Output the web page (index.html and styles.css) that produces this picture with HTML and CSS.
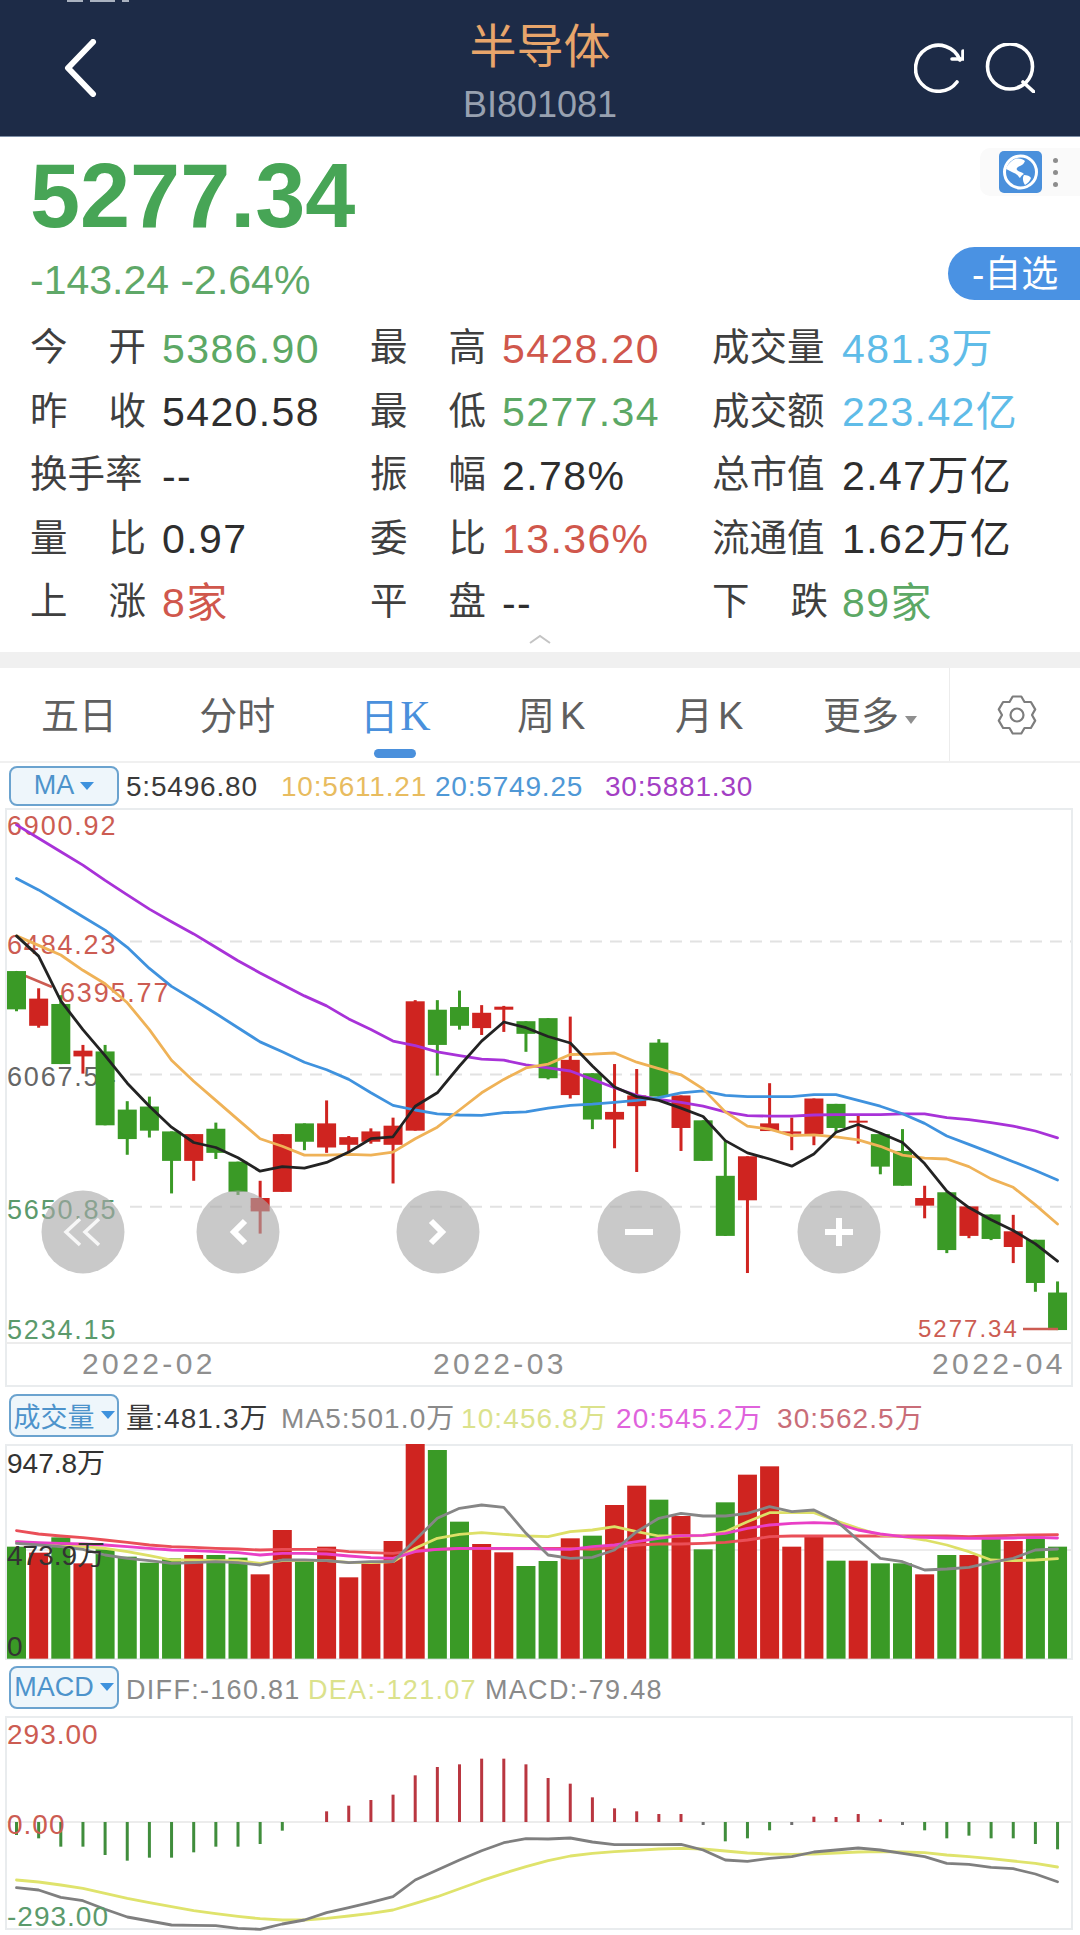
FILE: index.html
```html
<!DOCTYPE html>
<html lang="zh">
<head>
<meta charset="utf-8">
<title>半导体 BI801081</title>
<link rel="stylesheet" href="styles.css">
</head>
<body>
<div class="page">
  <header class="topbar">
    <div class="status-sliver"><i class="s1"></i><i class="s2"></i><i class="s3"></i></div>
    <svg class="back" viewBox="0 0 34 58"><path d="M30 3 5 29l25 26"/></svg>
    <div class="title-block">
      <div class="title">半导体</div>
      <div class="code">BI801081</div>
    </div>
    <div class="top-actions">
      <svg class="action" viewBox="0 0 50 50"><path d="M43 39A23 23 0 1 1 46 17"/><path d="M38 16h11V8"/></svg>
      <svg class="action" viewBox="0 0 50 50"><circle cx="25" cy="23.500" r="22.500"/><path d="m38 39 11 10"/></svg>
    </div>
  </header>

  <section class="quote">
    <div class="price">5277.34</div>
    <div class="change">-143.24 -2.64%</div>
    <div class="stats">
      <div class="stat"><span class="lab"><b>今</b><b>开</b></span><span class="val green">5386.90</span></div>
      <div class="stat"><span class="lab"><b>最</b><b>高</b></span><span class="val red">5428.20</span></div>
      <div class="stat"><span class="lab"><b>成交量</b></span><span class="val blue">481.3万</span></div>
      <div class="stat"><span class="lab"><b>昨</b><b>收</b></span><span class="val">5420.58</span></div>
      <div class="stat"><span class="lab"><b>最</b><b>低</b></span><span class="val green">5277.34</span></div>
      <div class="stat"><span class="lab"><b>成交额</b></span><span class="val blue">223.42亿</span></div>
      <div class="stat"><span class="lab"><b>换手率</b></span><span class="val">--</span></div>
      <div class="stat"><span class="lab"><b>振</b><b>幅</b></span><span class="val">2.78%</span></div>
      <div class="stat"><span class="lab"><b>总市值</b></span><span class="val">2.47万亿</span></div>
      <div class="stat"><span class="lab"><b>量</b><b>比</b></span><span class="val">0.97</span></div>
      <div class="stat"><span class="lab"><b>委</b><b>比</b></span><span class="val red">13.36%</span></div>
      <div class="stat"><span class="lab"><b>流通值</b></span><span class="val">1.62万亿</span></div>
      <div class="stat"><span class="lab"><b>上</b><b>涨</b></span><span class="val red">8家</span></div>
      <div class="stat"><span class="lab"><b>平</b><b>盘</b></span><span class="val">--</span></div>
      <div class="stat"><span class="lab"><b>下</b><b>跌</b></span><span class="val green">89家</span></div>
    </div>
    <div class="collapse"><svg viewBox="0 0 24 10"><path d="M2 9 12 2l10 7"/></svg></div>
    <div class="globe-pill">
      <svg class="globe" viewBox="0 0 43 42">
        <rect width="43" height="42" rx="5" fill="#4a90dc"/>
        <circle cx="21.500" cy="21" r="16" fill="none" stroke="#fff" stroke-width="3"/>
        <path d="M16 8c-4 2-8 6-9 10 3 1 5 3 8 4 3 1 4 3 6 5 1-2 2-3 4-4-2-2-5-2-7-4-1-2 1-3 3-4 3-1 4-3 5-5-2-2-6-3-10-2zM25 24c3 0 6 1 7 3-1 3-3 5-6 7-2-3-3-7-1-10z" fill="#fff"/>
      </svg>
      <span class="dots"><i></i><i></i><i></i></span>
    </div>
    <div class="watch-pill">-自选</div>
  </section>

  <div class="band"></div>

  <nav class="tabs">
    <div class="tab-list">
      <span class="tab">五日</span>
      <span class="tab">分时</span>
      <span class="tab active">日<em>K</em></span>
      <span class="tab spaced">周K</span>
      <span class="tab spaced">月K</span>
      <span class="tab">更多<i class="caret"></i></span>
    </div>
    <div class="gear-cell">
      <svg class="gear" viewBox="0 0 40 40"><path d="M15.700 1.500h8.600L27.500 7h6.400l4.300 7.400L35 20l3.200 5.600L33.900 33h-6.400l-3.200 5.500h-8.600L12.500 33H6.100l-4.300-7.400L5 20l-3.200-5.600L6.100 7h6.400z"/><circle cx="20" cy="20" r="6.500"/></svg>
    </div>
  </nav>

  <div class="ind-row">
    <div class="ind-btn"><span>MA</span><i class="tri"></i></div>
    <div class="ind-values ma-cols">
      <span class="dark">5:5496.80</span><span class="gold">10:5611.21</span><span class="sky">20:5749.25</span><span class="violet">30:5881.30</span>
    </div>
  </div>
  <svg id="main-chart" class="chart chart-main" viewBox="0 808 1080 582"></svg>

  <div class="ind-row ind-row-tall">
    <div class="ind-btn"><span>成交量</span><i class="tri"></i></div>
    <div class="ind-values vol-cols">
      <span class="dark">量:481.3万</span><span class="gray">MA5:501.0万</span><span class="lime">10:456.8万</span><span class="pink">20:545.2万</span><span class="rose">30:562.5万</span>
    </div>
  </div>
  <svg id="vol-chart" class="chart chart-vol" viewBox="0 1440 1080 222"></svg>

  <div class="ind-row ind-row-tall">
    <div class="ind-btn"><span>MACD</span><i class="tri"></i></div>
    <div class="ind-values macd-cols">
      <span class="gray">DIFF:-160.81</span><span class="lime">DEA:-121.07</span><span class="gray">MACD:-79.48</span>
    </div>
  </div>
  <svg id="macd-chart" class="chart chart-macd" viewBox="0 1712 1080 223"></svg>
</div>
<script src="charts.js"></script>
</body>
</html>
```

FILE: styles.css
```css
* { box-sizing: border-box; }
html, body { margin: 0; padding: 0; background: #fff; }
body {
  font-family: "Liberation Sans", "Noto Sans CJK SC", sans-serif;
  color: #333;
}
.page { width: 1080px; height: 1935px; overflow: hidden; display: flex; flex-direction: column; }

/* top bar */
.topbar {
  position: relative;
  flex: none;
  height: 137px;
  background: #1d2b47;
  border-bottom: 1px solid #7d8ea6;
  display: flex;
  justify-content: space-between;
  align-items: center;
  padding: 0 45px 0 63px;
}
.status-sliver { position: absolute; top: 0; left: 67px; display: flex; gap: 7px; }
.status-sliver i { display: block; height: 2px; background: #aab2c0; }
.status-sliver .s1 { width: 16px; }
.status-sliver .s2 { width: 25px; }
.status-sliver .s3 { width: 7px; }
.back { width: 34px; height: 58px; fill: none; stroke: #fff; stroke-width: 6; stroke-linecap: round; stroke-linejoin: round; }
.title-block {
  position: absolute;
  left: 0; right: 0; top: 20px;
  text-align: center;
}
.title { font-size: 47px; line-height: 54px; color: #e8a56b; }
.code { font-size: 36px; line-height: 40px; margin-top: 11px; color: #98a1b0; }
.top-actions { display: flex; gap: 21px; }
.action { width: 50px; height: 50px; fill: none; stroke: #fff; stroke-width: 3.600; stroke-linecap: round; stroke-linejoin: miter; }

/* quote */
.quote { position: relative; flex: none; height: 515px; padding: 14px 0 0 30px; }
.price { font-size: 90px; line-height: 90px; font-weight: 700; color: #47a556; }
.change { margin-top: 19px; font-size: 41px; line-height: 40px; color: #5fa868; }
.stats {
  margin-top: 17px;
  display: grid;
  grid-template-columns: 340px 342px 1fr;
  grid-auto-rows: 63.500px;
}
.stat { display: flex; align-items: center; gap: 16px; font-size: 37.500px; line-height: 46px; }
.stat:nth-child(3n) { gap: 14px; }
.lab { display: flex; justify-content: space-between; width: 116px; margin-bottom: 3px; color: #3f3f3f; white-space: nowrap; }
.lab b { font-weight: 400; }
.val { font-size: 41px; letter-spacing: 1.400px; color: #2e2e2e; white-space: nowrap; }
.green { color: #5ca865; }
.red { color: #d0574c; }
.blue { color: #5fbce8; }
.collapse { display: flex; justify-content: center; margin-left: -30px; margin-top: -1px; }
.collapse svg { width: 24px; height: 10px; fill: none; stroke: #c4c4c4; stroke-width: 2; }
.globe-pill {
  position: absolute; top: 11px; right: 0;
  width: 100px; height: 48px;
  padding-left: 19px;
  background: #fafafa;
  border-radius: 10px 0 0 10px;
  display: flex; align-items: center; gap: 11px;
}
.globe { width: 43px; height: 42px; flex: none; }
.dots { display: flex; flex-direction: column; gap: 7px; }
.dots i { display: block; width: 5px; height: 5px; border-radius: 50%; background: #8d8d8d; }
.watch-pill {
  position: absolute; top: 110px; right: 0;
  width: 132px; height: 53px;
  border-radius: 27px 0 0 27px;
  background: #4a92e3;
  color: #fff;
  font-size: 37px;
  line-height: 55px;
  padding-left: 24px;
  white-space: nowrap;
}
.band { flex: none; height: 16px; background: #f0f0f0; }

/* tabs */
.tabs { flex: none; height: 95px; display: flex; border-bottom: 2px solid #f0f0f0; }
.tab-list { width: 949px; display: grid; grid-template-columns: repeat(6, 1fr); align-items: center; }
.tab {
  position: relative;
  text-align: center;
  font-size: 38px;
  line-height: 97px;
  height: 95px;
  color: #5f5f5f;
}
.tab.spaced { letter-spacing: 5px; }
.tab.active { color: #4a90dc; }
.tab em { font-family: "Liberation Serif", serif; font-style: normal; font-size: 42px; margin-left: 2px; }
.tab.active::after {
  content: "";
  position: absolute;
  left: 50%; bottom: 5px;
  width: 42px; height: 9px;
  margin-left: -21px;
  border-radius: 5px;
  background: #4a90dc;
}
.caret {
  display: inline-block;
  width: 0; height: 0;
  margin-left: 6px;
  vertical-align: 5px;
  border-left: 6px solid transparent;
  border-right: 6px solid transparent;
  border-top: 8px solid #8f8f8f;
}
.gear-cell { flex: 1; border-left: 1px solid #ececec; display: flex; align-items: center; justify-content: center; padding-left: 4px; }
.gear { width: 40px; height: 40px; fill: none; stroke: #7d7d7d; stroke-width: 2.200; stroke-linejoin: round; }

/* indicator rows */
.ind-row { flex: none; height: 45px; padding-left: 9px; display: flex; align-items: center; white-space: nowrap; }
.ind-row-tall { height: 50px; }
.ind-btn {
  flex: none;
  width: 110px; height: 40px;
  display: flex; align-items: center; justify-content: center; gap: 6px;
  border: 2px solid #6ba3cf;
  border-radius: 8px;
  background: #eef6fb;
  color: #4d93cb;
  font-size: 27px;
}
.ind-row-tall .ind-btn { height: 43px; }
.tri { width: 0; height: 0; border-left: 7px solid transparent; border-right: 7px solid transparent; border-top: 8px solid #3e92dd; }
.ind-values { margin-left: 7px; display: grid; font-size: 28px; line-height: 36px; letter-spacing: .8px; }
.ma-cols { padding-top: 2px; grid-template-columns: 155px 154px 170px auto; }
.vol-cols { padding-top: 7px; grid-template-columns: 155px 180px 155px 161px auto; letter-spacing: 1.100px; }
.macd-cols { padding-top: 6px; grid-template-columns: 182px 177px auto; font-size: 27px; letter-spacing: 1.300px; }
.dark { color: #3a3a3a; }
.gold { color: #e8bc5f; }
.sky { color: #4f98d6; }
.violet { color: #a33fc4; }
.gray { color: #8a8a8a; }
.lime { color: #dbe28c; }
.pink { color: #df63dc; }
.rose { color: #c96d78; }

/* charts */
.chart { flex: none; display: block; width: 1080px; }
.chart-main { height: 582px; }
.chart-vol { height: 222px; }
.chart-macd { height: 223px; }
.frame { fill: #fff; stroke: #e9ecee; stroke-width: 2; }
.grid-dash { stroke: #e2e2e2; stroke-width: 2; stroke-dasharray: 12 8; }
.grid-solid { stroke: #ececec; stroke-width: 2; }
.ma { fill: none; stroke-width: 2.800; stroke-linejoin: round; stroke-linecap: round; }
.lbl { font-size: 27px; letter-spacing: 1.800px; }
.lbl-sm { font-size: 24px; letter-spacing: 2px; }
.lbl-date { font-size: 30px; letter-spacing: 3.400px; fill: #8f8f8f; }
.lbl-vol { font-size: 28px; fill: #333; }
.lbl-macd { font-size: 28px; letter-spacing: 1px; }
.t-red { fill: #cc5c52; }
.t-green { fill: #5b9a6c; }
.t-gray { fill: #666; }
.nav-disc { fill: #a8a8a8; fill-opacity: .62; }
.nav-glyph { fill: none; stroke: #fff; stroke-width: 6; stroke-linecap: butt; }
.nav-glyph-thin { fill: none; stroke: #fff; stroke-width: 3.500; opacity: .85; }
```

FILE: charts.js
```js
var NS = 'http://www.w3.org/2000/svg';
var RED = '#cf2420', GREEN = '#3a9a26';
function cx(i) { return 16.5 + 22.15 * i; }

function add(svg, tag, attrs, text) {
  var el = document.createElementNS(NS, tag);
  for (var k in attrs) el.setAttribute(k, attrs[k]);
  if (text) el.textContent = text;
  svg.appendChild(el);
  return el;
}
function line(svg, zs, toY, color, width) {
  var pts = zs.map(function (z, i) { return cx(i).toFixed(1) + ',' + toY(z).toFixed(1); }).join(' ');
  var a = { points: pts, 'class': 'ma', stroke: color };
  if (width) a['stroke-width'] = width;
  add(svg, 'polyline', a);
}

/* ---------- K line ---------- */
var main = document.getElementById('main-chart');
function mY(z) { return 800 + z / 2.613; }
/* colour, body top, body bottom, wick top, wick bottom */
var K = [
  ['G',447,547,447,552],['R',519,590,492,595],['G',533,690,510,690],['R',655,670,640,715],
  ['G',657,850,640,850],['G',809,886,787,927],['G',801,864,775,882],['G',866,943,866,1028],
  ['R',873,943,873,995],['G',859,922,843,938],['G',945,1024,945,1032],['R',1040,1075,995,1133],
  ['R',873,1024,873,1024],['G',845,893,845,915],['R',845,908,785,922],['R',881,901,878,922],
  ['R',866,893,858,898],['R',851,901,830,1002],['R',526,864,523,864],['G',548,640,523,720],
  ['G',541,590,498,600],['R',556,596,536,614],['R',540,548,538,606],['G',578,611,578,658],
  ['G',570,727,570,730],['R',679,771,566,780],['G',714,835,714,860],['R',815,835,690,910],
  ['R',772,800,703,972],['G',634,775,625,775],['R',772,857,772,917],['G',837,943,837,943],
  ['G',982,1139,890,1139],['R',931,1046,931,1236],['R',845,865,740,865],['R',866,872,830,915],
  ['R',780,873,780,902],['G',794,857,794,870],['R',838,843,822,898],['G',873,958,873,978],
  ['G',917,1008,860,1008],['R',1040,1060,1008,1093],['G',1025,1176,1025,1184],['R',1062,1139,1062,1145],
  ['G',1083,1147,1083,1150],['R',1127,1168,1084,1210],['G',1149,1262,1149,1285],['G',1287,1385,1258,1385]
];
var MA5 = [355,408,525,600,668,740,800,855,895,908,935,970,958,962,947,920,885,880,800,765,695,630,580,595,
  618,635,695,750,775,785,805,827,890,922,938,957,925,868,848,870,895,950,1022,1065,1097,1125,1160,1205];
var MA10 = [355,380,405,445,480,530,600,680,735,785,835,885,905,928,928,926,928,920,885,855,810,765,730,700,
  690,665,664,661,685,702,718,755,815,852,860,877,875,880,888,905,928,936,938,958,990,1012,1058,1108];
var MA20 = [205,235,270,305,340,385,440,487,522,558,595,632,658,685,705,730,765,798,810,820,823,824,817,815,
  805,798,795,790,785,778,765,760,772,775,775,775,770,770,785,800,820,845,878,900,922,945,968,993];
var MA30 = [65,100,135,170,210,248,285,318,350,385,420,452,482,512,538,572,600,630,642,658,668,677,680,692,
  700,708,730,752,772,782,790,800,815,825,826,826,823,822,822,822,820,820,830,835,843,852,865,883];

add(main, 'rect', { x: 6, y: 809, width: 1066, height: 577, 'class': 'frame' });
[941.6, 1074.4, 1206.8].forEach(function (y) {
  add(main, 'line', { x1: 130, x2: 1071, y1: y, y2: y, 'class': 'grid-dash' });
});
add(main, 'line', { x1: 6, x2: 1072, y1: 1343, y2: 1343, 'class': 'grid-solid' });

function mainText(x, y, s, cls) { add(main, 'text', { x: x, y: y, 'class': cls }, s); }
mainText(7, 835, '6900.92', 'lbl t-red');
mainText(7, 954, '6484.23', 'lbl t-red');
mainText(60, 1002, '6395.77', 'lbl t-red');
mainText(7, 1086, '6067.54', 'lbl t-gray');
mainText(7, 1219, '5650.85', 'lbl t-green');
mainText(7, 1339, '5234.15', 'lbl t-green');
mainText(82, 1374, '2022-02', 'lbl-date');
mainText(433, 1374, '2022-03', 'lbl-date');
mainText(932, 1374, '2022-04', 'lbl-date');
mainText(918, 1337, '5277.34', 'lbl-sm t-red');

add(main, 'polyline', { points: '16,972 52,987', fill: 'none', stroke: '#cc5c52', 'stroke-width': 2.5 });

K.forEach(function (c, i) {
  var col = c[0] === 'R' ? RED : GREEN, x = cx(i);
  add(main, 'rect', { x: x - 1.5, y: mY(c[3]), width: 3, height: mY(c[4]) - mY(c[3]), fill: col });
  add(main, 'rect', { x: x - 9.5, y: mY(c[1]), width: 19, height: mY(c[2]) - mY(c[1]), fill: col });
});
add(main, 'line', { x1: 1023, x2: 1058, y1: 1329, y2: 1329, stroke: '#cc5c52', 'stroke-width': 2.5 });

line(main, MA30, mY, '#a832d8');
line(main, MA20, mY, '#3f92de');
line(main, MA10, mY, '#efb257');
line(main, MA5, mY, '#232323');

[83, 238, 438, 639, 839].forEach(function (x) {
  add(main, 'circle', { cx: x, cy: 1232, r: 41.5, 'class': 'nav-disc' });
});
add(main, 'path', { d: 'M80 1219 66 1232l14 13M99 1219l-14 13 14 13', 'class': 'nav-glyph-thin' });
add(main, 'path', { d: 'M245 1221 234 1232l11 11', 'class': 'nav-glyph' });
add(main, 'path', { d: 'M431 1221l11 11-11 11', 'class': 'nav-glyph' });
add(main, 'path', { d: 'M625 1232h28', 'class': 'nav-glyph' });
add(main, 'path', { d: 'M825 1232h28M839 1218v28', 'class': 'nav-glyph' });

/* ---------- volume ---------- */
var vol = document.getElementById('vol-chart');
function vY(z) { return 1390 + z / 3; }
var VT = [470,488,442,520,478,500,518,505,495,495,503,553,420,510,470,562,520,453,162,180,395,462,487,528,
  513,445,437,345,287,329,378,478,337,254,229,470,440,512,512,520,520,553,495,495,445,453,440,470];
var VOVR = { 44: 'G', 46: 'G' };

var V5 = [460,465,470,478,495,505,512,520,518,515,518,525,510,510,512,518,515,515,450,385,355,345,352,430,
  495,505,502,480,425,385,370,378,378,370,350,365,360,392,450,505,515,540,537,532,517,505,480,477];
var V10 = [455,460,468,470,475,485,497,510,510,512,512,520,512,512,512,517,518,515,475,445,433,428,433,438,
  440,425,420,410,425,438,438,437,425,395,368,368,368,392,415,435,440,450,465,485,510,512,510,506];
var V20 = [455,458,460,462,465,470,475,480,482,485,488,495,490,490,492,498,503,505,485,478,475,475,475,475,
  477,478,470,465,455,445,437,436,430,415,405,400,398,400,420,432,440,442,444,445,445,444,442,444];
var V30 = [422,432,438,443,450,457,465,470,472,475,477,480,478,478,478,485,488,490,482,478,476,475,475,475,
  475,475,478,472,465,462,462,460,457,450,440,438,438,438,438,438,438,438,438,440,438,436,435,434];

add(vol, 'rect', { x: 6, y: 1445, width: 1066, height: 214, 'class': 'frame' });
add(vol, 'line', { x1: 6, x2: 1072, y1: 1550, y2: 1550, 'class': 'grid-solid' });
VT.forEach(function (z, i) {
  var c = VOVR[i] || K[i][0];
  add(vol, 'rect', { x: cx(i) - 9.5, y: vY(z), width: 19, height: vY(806) - vY(z), fill: c === 'R' ? RED : GREEN });
});
line(vol, V30, vY, '#ea4f58', 3);
line(vol, V10, vY, '#dde067', 3);
line(vol, V20, vY, '#e93fc6', 3);
line(vol, V5, vY, '#868686', 2.6);
[[1473, '947.8万'], [1565, '473.9万'], [1656, '0']].forEach(function (t) {
  add(vol, 'text', { x: 7, y: t[0], 'class': 'lbl-vol' }, t[1]);
});

/* ---------- MACD ---------- */
var macd = document.getElementById('macd-chart');
function cY(z) { return 1670 + z / 3; }
var H = [495,505,530,530,555,572,563,563,547,530,530,522,482,null,424,407,390,374,316,291,283,266,266,283,
  324,341,382,415,424,432,432,'d',514,505,481,'d',440,441,432,448,'d',481,505,497,505,505,522,538];
var DIFF = [653,660,682,692,718,741,753,765,766,767,775,778,762,750,728,713,697,680,630,600,570,542,518,506,
  507,504,516,524,524,524,523,540,570,574,565,560,546,540,534,540,550,560,580,583,592,596,612,635];
var DEA = [630,636,645,655,670,685,698,710,722,731,739,746,750,750,745,738,730,720,700,680,656,632,610,590,
  572,558,550,545,541,537,535,537,543,549,552,553,552,549,546,545,546,548,555,560,566,573,580,591];

add(macd, 'rect', { x: 6, y: 1717, width: 1066, height: 212, 'class': 'frame' });
add(macd, 'line', { x1: 6, x2: 1072, y1: 1822, y2: 1822, 'class': 'grid-solid' });
H.forEach(function (z, i) {
  if (z === null) return;
  var x = cx(i) - 1.5, y0 = 1822;
  if (z === 'd') { add(macd, 'rect', { x: x, y: 1822, width: 3, height: 3, fill: '#6f6f6f' }); return; }
  var y = cY(z);
  add(macd, 'rect', {
    x: x, y: Math.min(y, y0), width: 3, height: Math.abs(y - y0),
    fill: y < y0 ? '#b93640' : '#408d3c'
  });
});
line(macd, DEA, cY, '#dfe36c', 3);
line(macd, DIFF, cY, '#7f7f7f', 2.6);
add(macd, 'text', { x: 7, y: 1744, 'class': 'lbl-macd t-red' }, '293.00');
add(macd, 'text', { x: 7, y: 1834, 'class': 'lbl-macd t-red' }, '0.00');
add(macd, 'text', { x: 7, y: 1926, 'class': 'lbl-macd t-green' }, '-293.00');
```
